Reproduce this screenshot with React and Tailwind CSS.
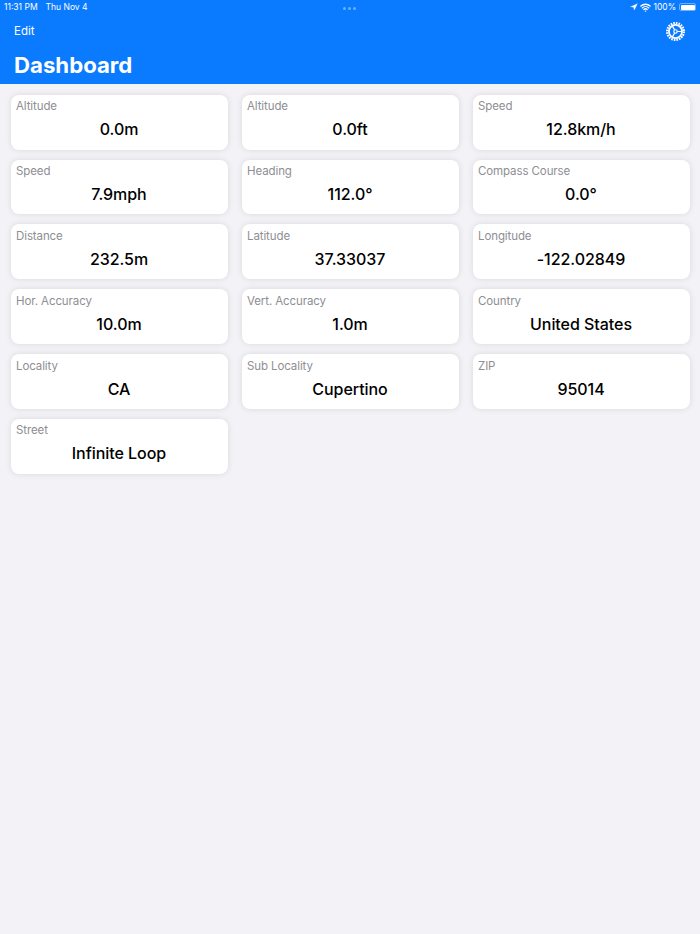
import { Navigation, Wifi } from 'lucide-react'

const font = { fontFamily: 'Inter, "Liberation Sans", sans-serif' }

const cards = [
  ['Altitude', '0.0m'],
  ['Altitude', '0.0ft'],
  ['Speed', '12.8km/h'],
  ['Speed', '7.9mph'],
  ['Heading', '112.0°'],
  ['Compass Course', '0.0°'],
  ['Distance', '232.5m'],
  ['Latitude', '37.33037'],
  ['Longitude', '-122.02849'],
  ['Hor. Accuracy', '10.0m'],
  ['Vert. Accuracy', '1.0m'],
  ['Country', 'United States'],
  ['Locality', 'CA'],
  ['Sub Locality', 'Cupertino'],
  ['ZIP', '95014'],
  ['Street', 'Infinite Loop'],
]

function Gear() {
  return (
    <svg width="19" height="19" viewBox="0 0 20 20" fill="none" stroke="white">
      <circle cx="10" cy="10" r="8.9" strokeWidth="2.2" strokeDasharray="1.75 1.05" />
      <circle cx="10" cy="10" r="6.9" strokeWidth="1.9" />
      <circle cx="10" cy="10" r="1.8" strokeWidth="1.2" />
      <path d="M11.8 10H16M9.1 8.4 6.9 4.6M9.1 11.6 6.9 15.4" strokeWidth="1.3" />
    </svg>
  )
}

function Card({ label, value }) {
  return (
    <div className="h-[54.84px] rounded-[8px] bg-white px-[5.5px] pt-[3.55px] shadow-[0_0_6px_rgba(0,0,0,0.11)]">
      <p className="text-[11.5px] leading-[16px] tracking-[-0.1px] text-[#8e8e93]">{label}</p>
      <p className="mt-[3px] text-center text-[16px] leading-[24px] font-[550] tracking-[-0.05px] text-black">{value}</p>
    </div>
  )
}

export default function App() {
  return (
    <div className="min-h-[934px] bg-[#f2f2f7]" style={font}>
      <header className="h-[84px] bg-[#0a7aff] text-white">
        <div className="relative flex h-[14px] items-center justify-between pr-[4px] pl-[4px] text-[8.5px]">
          <div className="flex gap-[8px]">
            <span>11:31 PM</span>
            <span>Thu Nov 4</span>
          </div>
          <div className="absolute top-[7px] left-[343px] flex gap-[2px]">
            <span className="h-[3px] w-[3px] rounded-full bg-[#62b5ff]" />
            <span className="h-[3px] w-[3px] rounded-full bg-[#62b5ff]" />
            <span className="h-[3px] w-[3px] rounded-full bg-[#62b5ff]" />
          </div>
          <div className="flex items-center gap-[2px]">
            <Navigation size={8} fill="white" strokeWidth={1} />
            <Wifi size={11} strokeWidth={3} />
            <span>100%</span>
            <span className="ml-[1px] flex h-[8px] w-[17px] rounded-[2px] border border-white/40 p-[0.5px]">
              <span className="flex-1 rounded-[1px] bg-white" />
            </span>
          </div>
        </div>
        <div className="flex h-[35px] items-center justify-between pr-[15px] pl-[14px]">
          <span className="text-[11.5px]">Edit</span>
          <Gear />
        </div>
        <h1 className="pt-[1px] pl-[14px] text-[22.2px] leading-[30px] font-bold">Dashboard</h1>
      </header>
      <main className="grid grid-cols-[217px_217px_217px] gap-x-[14px] gap-y-[10px] pt-[10.8px] pl-[10.5px]">
        {cards.map((c, i) => <Card key={i} label={c[0]} value={c[1]} />)}
      </main>
    </div>
  )
}
